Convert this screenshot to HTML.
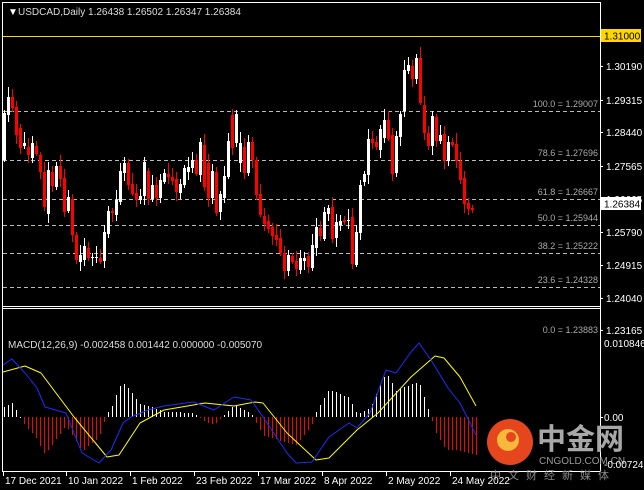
<!DOCTYPE html>
<html><head><meta charset="utf-8"><style>
body{margin:0;background:#000;width:644px;height:490px;overflow:hidden}
svg{display:block}
text{font-family:"Liberation Sans",sans-serif}
</style></head><body>
<svg id="s" width="644" height="490" xmlns="http://www.w3.org/2000/svg">
<rect width="644" height="490" fill="#000"/>
<line x1="2.5" y1="2" x2="2.5" y2="472" stroke="#fff"/>
<line x1="600.5" y1="2" x2="600.5" y2="472" stroke="#fff"/>
<line x1="2" y1="2.5" x2="601" y2="2.5" stroke="#fff"/>
<line x1="2" y1="306.5" x2="601" y2="306.5" stroke="#fff"/>
<line x1="2" y1="308.5" x2="601" y2="308.5" stroke="#fff"/>
<line x1="2" y1="471.5" x2="601" y2="471.5" stroke="#fff"/>
<line x1="3" y1="36.5" x2="600" y2="36.5" stroke="#ffd700"/>
<rect x="601" y="29" width="40" height="13" fill="#ffd700"/>
<text x="604" y="39.5" font-size="10" fill="#000">1.31000</text>
<g id="fib" stroke="#bbb" stroke-dasharray="4,3"></g>
<g id="fibt" font-size="9" fill="#aaa" text-anchor="end"></g>
<g id="axis" font-size="10" fill="#fff"></g>
<rect x="601" y="197" width="40" height="13" fill="#fff"/>
<text x="604" y="207.5" font-size="10" fill="#000">1.26384</text>
<g id="c" shape-rendering="crispEdges"></g>
<g id="h" shape-rendering="crispEdges"></g>
<polyline id="yl" fill="none" stroke="#ffff00" stroke-width="1" stroke-linejoin="round"/>
<polyline id="bl" fill="none" stroke="#1e2cff" stroke-width="1" stroke-linejoin="round"/>
<text x="8" y="15" font-size="10" fill="#fff">&#9660;</text>
<text x="18" y="15" font-size="10" fill="#ddd">USDCAD,Daily  1.26438 1.26502 1.26347 1.26384</text>
<text x="8" y="348" font-size="10" fill="#ddd">MACD(12,26,9) -0.002458 0.001442 0.000000 -0.005070</text>
<text x="604" y="347" font-size="10" fill="#fff">0.010846</text>
<text x="604" y="421" font-size="10" fill="#fff">0.00</text>
<line x1="600" y1="417.5" x2="603" y2="417.5" stroke="#fff"/>
<circle cx="510" cy="442" r="23" fill="#e5461e"/>
<circle cx="508" cy="440" r="11" fill="#f6b93b"/>
<circle cx="511" cy="437" r="5" fill="#e5461e"/>
<text x="537" y="449" font-size="29" font-weight="bold" fill="#a8a8a8" style="font-family:'Noto Sans CJK SC',sans-serif">中金网</text>
<text x="539" y="464" font-size="10" fill="#999">CNGOLD.COM.CN</text>
<text x="604" y="468" font-size="10" fill="#fff">-0.00724</text>
<text x="490" y="479" font-size="11" fill="#888" letter-spacing="7" style="font-family:'Noto Sans CJK SC',sans-serif">中文财经新媒体</text>
<g id="dates" font-size="10" fill="#fff"></g>
</svg>
<script>
var NS="http://www.w3.org/2000/svg";
function el(p,t,a,txt){var e=document.createElementNS(NS,t);for(var k in a)e.setAttribute(k,a[k]);if(txt)e.textContent=txt;document.getElementById(p).appendChild(e);return e;}
var fibs=[[111,"100.0 = 1.29007"],[160,"78.6 = 1.27696"],[199,"61.8 = 1.26667"],[225,"50.0 = 1.25944"],[253,"38.2 = 1.25222"],[287,"23.6 = 1.24328"]];
fibs.forEach(function(f){el("fib","line",{x1:3,y1:f[0]+.5,x2:600,y2:f[0]+.5});el("fibt","text",{x:598,y:f[0]-4},f[1]);});
el("fibt","text",{x:598,y:333},"0.0 = 1.23883");
var ax=[["1.30190",66],["1.29315",100],["1.28440",132],["1.27565",166],["1.26665",199],["1.25790",232],["1.24915",265],["1.24040",298],["1.23165",330]];
ax.forEach(function(a){el("axis","text",{x:606,y:a[1]+4},a[0]);el("axis","line",{x1:600,y1:a[1]+.5,x2:603,y2:a[1]+.5,stroke:"#fff"});});
var C="3,113,160,w;7,97,115,w;11,97,108,r;15,107,135,r;19,128,148,r;23,143,146,w;27,147,155,r;31,143,158,w;35,146,154,r;39,155,172,r;43,172,207,r;47,170,214,w;51,172,186,r;55,166,187,w;59,166,179,r;63,178,212,r;67,197,211,w;71,199,235,r;75,235,260,r;79,255,262,w;83,246,260,w;87,248,258,r;91,257,258,w;95,257,258,w;99,258,262,r;103,232,261,w;107,211,234,w;111,211,213,r;115,200,215,w;119,171,202,w;123,163,173,w;127,163,185,r;131,184,194,r;135,193,200,r;139,196,200,w;143,162,196,w;147,171,199,r;151,185,199,w;155,185,198,r;159,180,198,w;163,173,182,w;167,174,177,r;171,177,181,r;175,179,192,r;179,184,193,w;183,168,185,w;187,167,172,w;191,160,168,w;195,160,174,r;199,142,175,w;203,145,187,r;207,163,198,r;211,171,198,w;215,172,213,r;219,194,212,w;223,176,198,w;227,141,177,w;231,115,148,r;235,114,143,w;239,143,163,w;243,147,173,r;247,142,173,w;251,142,160,r;255,160,195,r;259,194,215,r;263,216,224,r;267,221,229,r;271,227,236,r;275,235,240,r;279,238,253,r;283,253,271,r;287,255,271,w;291,256,262,r;295,261,269,r;299,258,270,w;303,258,261,w;307,256,267,r;311,245,268,w;315,227,248,w;319,228,236,r;323,212,239,w;327,208,214,w;331,207,239,r;335,222,238,w;339,221,225,w;343,220,222,r;347,220,221,w;351,217,264,r;355,232,265,w;359,185,233,w;363,174,182,w;367,139,175,w;371,139,143,r;375,142,147,r;379,129,150,w;383,120,138,w;387,120,139,r;391,135,174,r;395,136,173,w;399,114,137,w;403,70,111,w;407,65,71,w;411,66,79,r;415,58,79,w;419,58,103,r;423,105,133,r;427,133,146,r;431,116,146,w;435,117,141,r;439,135,141,w;443,134,161,r;447,142,161,w;451,142,145,r;455,144,161,r;459,161,180,r;463,178,204,r;467,203,209,r;471,208,210,r";
C.split(";").forEach(function(s,i){var p=s.split(",");var x=+p[0]+1,t=+p[1],b=+p[2];var col=p[3]=="w"?"#fff":"#ff0000";
var wt=t-(3+(i*7)%9),wb=b+(2+(i*5)%8);
el("c","rect",{x:x,y:wt,width:1,height:wb-wt,fill:col});
el("c","rect",{x:x-1,y:t,width:3,height:Math.max(1,b-t),fill:col});});
var B=[[3,365],[12,359],[25,373],[37,388],[45,407],[66,413],[82,453],[99,463],[111,450],[123,423],[131,417],[148,410],[164,406],[193,402],[214,410],[234,397],[251,400],[263,417],[287,453],[296,463],[312,462],[329,437],[349,423],[357,428],[370,413],[386,370],[396,373],[411,352],[419,343],[431,360],[448,388],[460,403],[476,435]];
var Y=[[3,372],[25,366],[41,373],[74,417],[107,457],[119,455],[140,423],[164,410],[205,403],[234,406],[255,402],[263,403],[287,433],[316,460],[329,458],[357,430],[378,413],[411,377],[435,356],[444,358],[460,377],[476,406]];
function interp(a,x){for(var i=0;i<a.length-1;i++){if(x>=a[i][0]&&x<=a[i+1][0]){var t=(x-a[i][0])/(a[i+1][0]-a[i][0]);return a[i][1]+t*(a[i+1][1]-a[i][1]);}}return a[a.length-1][1];}
document.getElementById("bl").setAttribute("points",B.map(function(p){return p.join(",")}).join(" "));
document.getElementById("yl").setAttribute("points",Y.map(function(p){return p.join(",")}).join(" "));
for(var x=4;x<=476;x+=4){var d=Math.round((interp(Y,x)-interp(B,x))*1.3);var z=417;
if(d>=0)el("h","rect",{x:x,y:z-d,width:1,height:Math.max(1,d),fill:"#fff"});
else el("h","rect",{x:x,y:z,width:1,height:-d,fill:"#ff0000"});}
var D=[["17 Dec 2021",3],["10 Jan 2022",66],["1 Feb 2022",130],["23 Feb 2022",194],["17 Mar 2022",258],["8 Apr 2022",322],["2 May 2022",386],["24 May 2022",450]];
D.forEach(function(d){el("dates","text",{x:d[1]+2,y:484},d[0]);el("dates","line",{x1:d[1]+.5,y1:472,x2:d[1]+.5,y2:476,stroke:"#fff"});});
</script>
</body></html>
